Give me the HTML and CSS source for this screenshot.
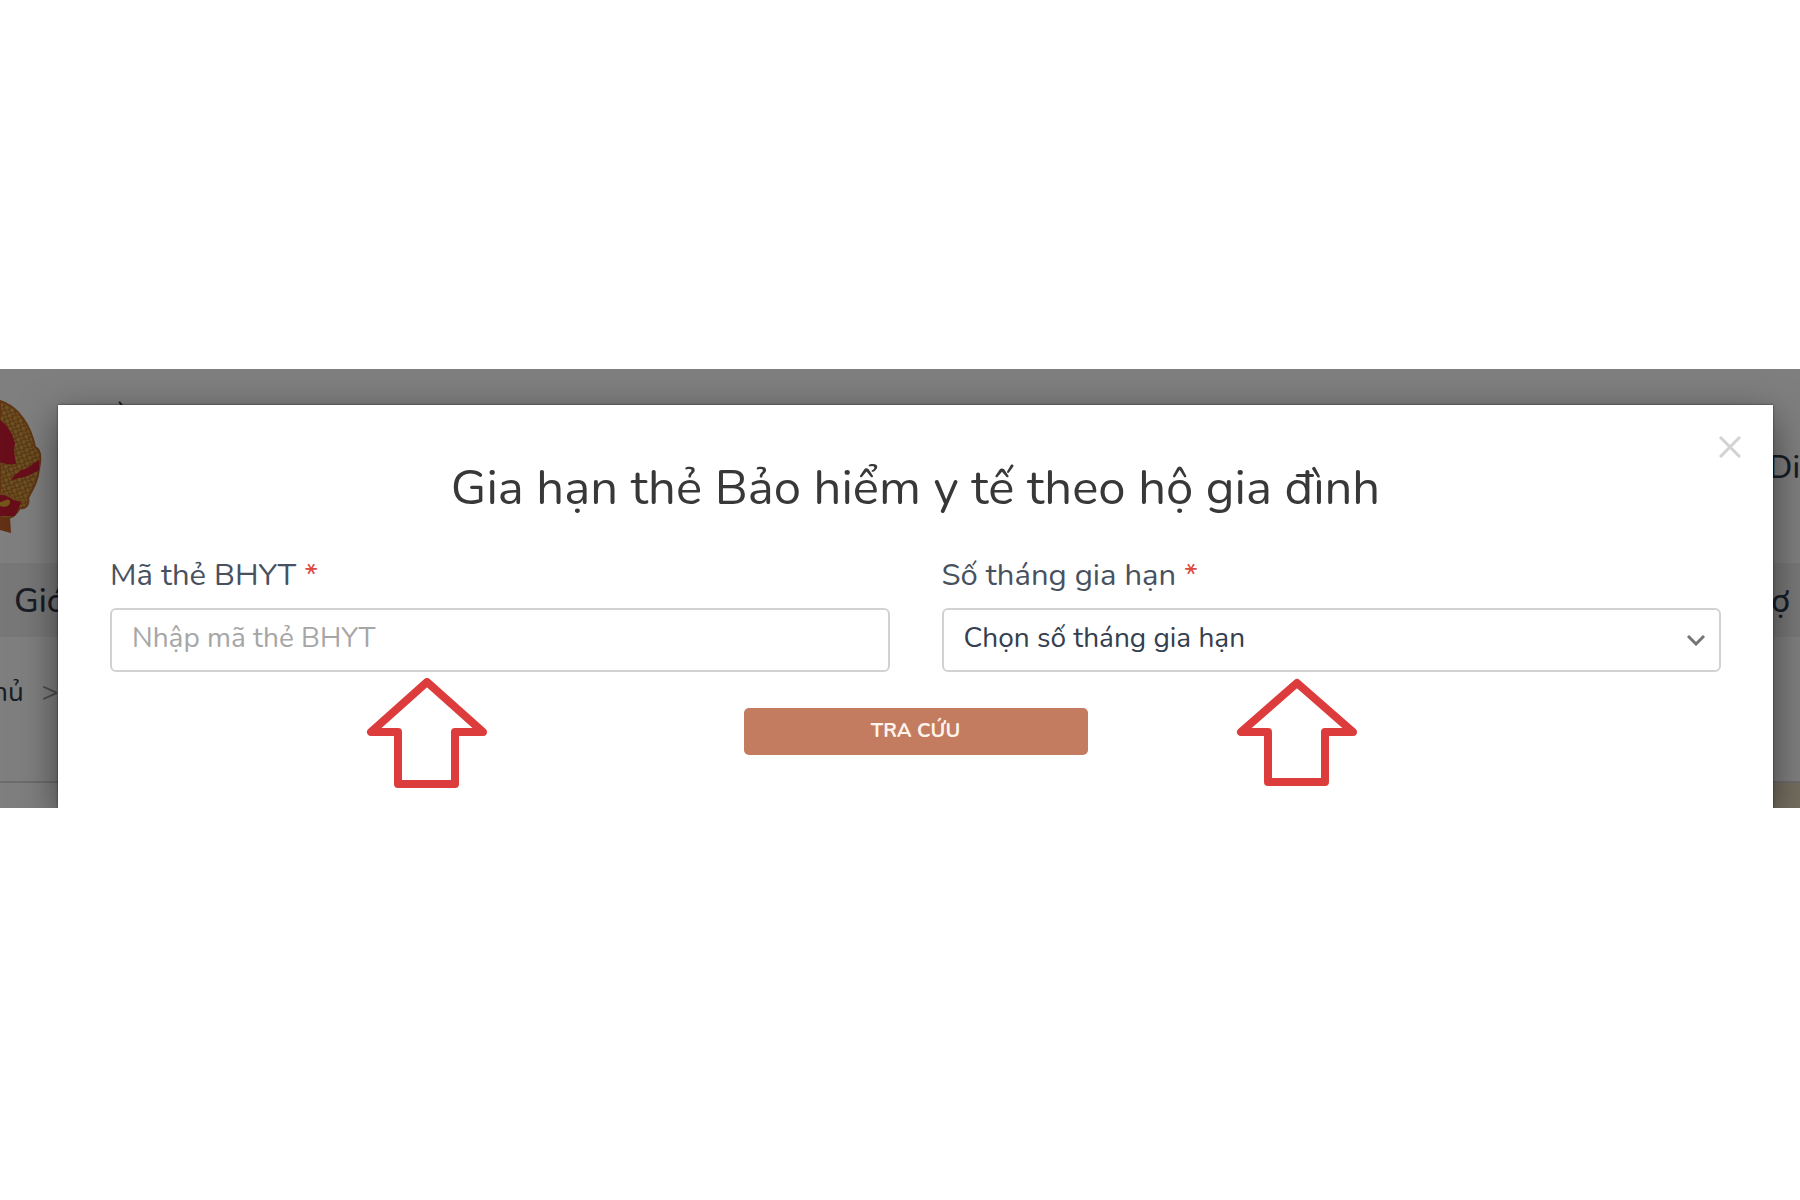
FILE: index.html
```html
<!DOCTYPE html>
<html lang="vi">
<head>
    <meta charset="UTF-8">
    <meta name="viewport" content="width=device-width, initial-scale=1.0">
    <title>Gia hạn thẻ Bảo hiểm y tế theo hộ gia đình</title>
    <link rel="stylesheet" href="styles.css">
</head>
<body>

<main class="screen">
    <div class="page">
        <header class="page-header">
            <svg class="emblem" viewBox="0 0 46 146" aria-hidden="true">
                <defs>
                    <pattern id="grain" width="6" height="6" patternUnits="userSpaceOnUse" patternTransform="rotate(25)">
                        <rect width="6" height="6" fill="#b87030"/>
                        <ellipse cx="2" cy="2" rx="2" ry="2" fill="#dca840"/>
                        <ellipse cx="5" cy="5" rx="2" ry="1" fill="#dca840"/>
                    </pattern>
                </defs>
                <path d="M0 112h9l2 32L0 141z" fill="#c4602a"/>
                <path d="M0 12C18 17 31 37 35 58c5 2 7 8 4 22-1 12-6 20-11 29 2 7-3 11-8 10-5 9-12 12-20 9z" fill="url(#grain)" stroke="#c06a28" stroke-width="2"/>
                <path d="M0 31c8 5 14 16 15 24-2 6 0 12 1 20-5 1-11 0-16-2z" fill="#d01c34"/>
                <path d="M12 91c0-5 6-6 9-10 7-1 12-7 18-10v10c-8 4-13 8-20 8-3 0-4 2-7 2z" fill="#d01c34"/>
                <path d="M0 106c7-2 12 8 22 6l-7 15H0z" fill="#d01c34"/>
                <path d="M0 105c8-1 14 4 24 8" fill="none" stroke="#d08a38" stroke-width="2"/>
                <path d="M0 113c4 0 7-5 10-1 1 5-5 7-10 5z" fill="#e4ac34"/>
            </svg>
            <span class="site-name">À</span>
            <a class="header-link" href="#">Di</a>
        </header>
        <nav class="page-nav">
            <a href="#">Giớ</a>
            <a href="#">ợ</a>
        </nav>
        <div class="breadcrumb"><a href="#">hủ</a><span>&gt;</span></div>
        <div class="page-body"></div>
    </div>

    <div class="overlay">
        <section class="modal" role="dialog" aria-labelledby="modalTitle">
            <button class="close-btn" type="button" aria-label="Đóng">
                <svg viewBox="0 0 22 22"><path d="M1 1l20 20M21 1L1 21"/></svg>
            </button>
            <h1 id="modalTitle">Gia hạn thẻ Bảo hiểm y tế theo hộ gia đình</h1>
            <form>
                <div class="fields">
                    <div class="field">
                        <label for="cardCode">Mã thẻ BHYT <span class="required">*</span></label>
                        <input type="text" id="cardCode" placeholder="Nhập mã thẻ BHYT">
                        <svg class="arrow arrow-card" viewBox="0 0 122 112"><path d="M62 4L6 54h27v52h57V54h28z"/></svg>
                    </div>
                    <div class="field">
                        <label for="months">Số tháng gia hạn <span class="required">*</span></label>
                        <select id="months">
                            <option>Chọn số tháng gia hạn</option>
                        </select>
                        <svg class="chevron" viewBox="0 0 18 11"><path d="M1 1l8 8 8-8"/></svg>
                        <svg class="arrow arrow-months" viewBox="0 0 122 112"><path d="M61 5L5 54h27v50h57V54h28z"/></svg>
                    </div>
                </div>
                <button class="search-btn" type="button">TRA CỨU</button>
            </form>
        </section>
    </div>
</main>

</body>
</html>
```

FILE: styles.css
```css
* {
    box-sizing: border-box;
}
body {
    margin: 0;
    background-color: #fff;
    font-family: Nunito, "Noto Sans", sans-serif;
    color: #34404f;
}
a {
    color: inherit;
    text-decoration: none;
}

/* page under the dialog */
.screen {
    display: grid;
    margin-top: 369px;
    overflow: hidden;
}
.page, .overlay {
    grid-area: 1 / 1;
}
.page {
    display: flex;
    flex-direction: column;
    background-color: #fff;
    color: #303a4c;
}
.page-header {
    display: flex;
    height: 194px;
    padding-top: 20px;
}
.emblem {
    width: 46px;
    height: 146px;
}
.site-name {
    margin-left: 66px;
    padding-top: 12px;
    font-size: 30px;
    line-height: 40px;
}
.header-link {
    margin-left: auto;
    padding-top: 59px;
    font-size: 32px;
    font-weight: 500;
    line-height: 40px;
}
.page-nav {
    display: flex;
    justify-content: space-between;
    padding: 2px 10px 0 14px;
    background-color: #f0f0f0;
    font-size: 34px;
    font-weight: 500;
    line-height: 72px;
}
.breadcrumb {
    display: flex;
    gap: 18px;
    height: 146px;
    border-bottom: 2px solid #d8d8d8;
    font-size: 28px;
    line-height: 110px;
}
.breadcrumb a {
    margin-left: -8px;
}
.breadcrumb span {
    color: #999;
}
.page-body {
    flex: 1;
    background: linear-gradient(to left, #e8dcc0 50px, #fff 50px);
}

/* dialog */
.overlay {
    padding: 36px 27px 0 58px;
    background-color: rgba(0, 0, 0, 0.5);
}
.modal {
    position: relative;
    padding: 51px 52px 53px;
    background-color: #fff;
    box-shadow: 0 0 2px rgba(0, 0, 0, 0.6), 0 12px 36px rgba(0, 0, 0, 0.5);
}
.close-btn {
    position: absolute;
    top: 31px;
    right: 32px;
    width: 22px;
    height: 22px;
    padding: 0;
    border: none;
    background: none;
    cursor: pointer;
}
.close-btn svg {
    display: block;
    fill: none;
    stroke: #d2d2d2;
    stroke-width: 3;
}
h1 {
    margin: 0 0 39px;
    font-size: 49px;
    font-weight: 400;
    line-height: 64px;
    text-align: center;
    color: #383838;
}
.fields {
    display: grid;
    grid-template-columns: 1fr 1fr;
    gap: 52px;
    margin-bottom: 36px;
}
.field {
    position: relative;
}
label {
    display: block;
    margin-bottom: 17px;
    font-size: 31px;
    font-weight: 400;
    line-height: 32px;
    color: #48525f;
}
.required {
    color: #dc4a3c;
}
input, select {
    display: block;
    width: 100%;
    height: 64px;
    padding: 0 20px 4px;
    border: 2px solid #d2d2d2;
    border-radius: 6px;
    background-color: #fff;
    font-family: inherit;
    font-size: 28px;
    color: #34404f;
    appearance: none;
}
input::placeholder {
    color: #a6a6a6;
}
.chevron {
    position: absolute;
    right: 16px;
    bottom: 26px;
    width: 18px;
    height: 11px;
    fill: none;
    stroke: #757575;
    stroke-width: 3;
    pointer-events: none;
}
.arrow {
    position: absolute;
    top: 100%;
    width: 122px;
    height: 112px;
    margin: 6px 0 0 -2px;
    fill: none;
    stroke: #dc3c3c;
    stroke-width: 8;
    stroke-linejoin: round;
}
.arrow-card {
    left: 33%;
}
.arrow-months {
    left: 38%;
}
.search-btn {
    display: block;
    width: 344px;
    height: 47px;
    margin: 0 auto;
    padding: 0 0 2px;
    border: none;
    border-radius: 5px;
    background-color: #c47c60;
    font-family: inherit;
    font-size: 20px;
    font-weight: 700;
    color: #fff4ec;
    cursor: pointer;
}
```
